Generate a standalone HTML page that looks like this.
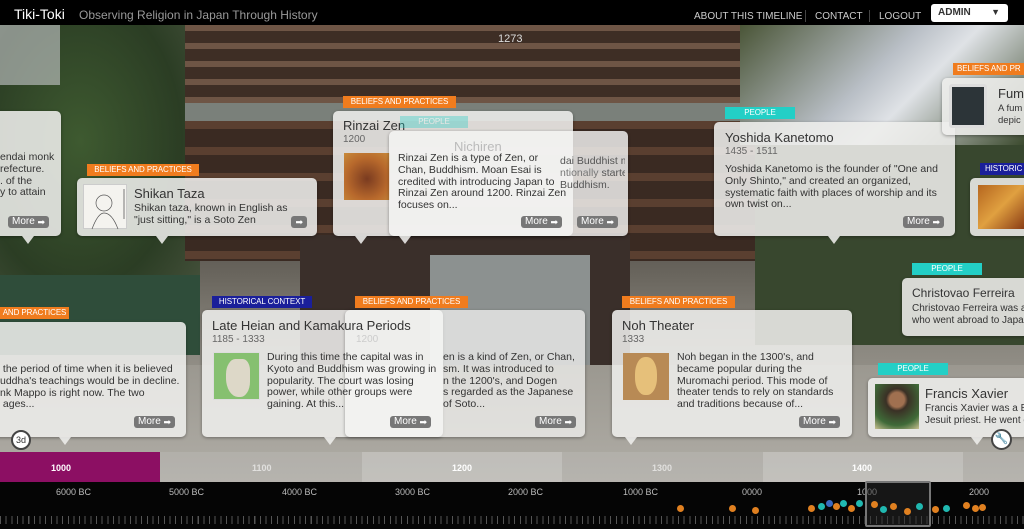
<!DOCTYPE html>
<html><head><meta charset="utf-8"><style>
*{margin:0;padding:0;box-sizing:border-box}
body{width:1024px;height:529px;overflow:hidden;position:relative;font-family:"Liberation Sans",Arial,sans-serif;background:#000}
.a{position:absolute}
.bg{position:absolute;left:0;top:25px;width:1024px;height:457px;overflow:hidden;
background:linear-gradient(180deg,#5a4638 0%,#6b5444 20%,#4e4a45 40%,#6a665e 55%,#8a877f 70%,#a09c94 85%,#8e8a82 100%)}
.card{position:absolute;background:rgba(238,238,236,0.88);border-radius:5px;box-shadow:0 1px 3px rgba(0,0,0,.35);color:#333;font-size:11px;line-height:12px}
.lab{position:absolute;height:12px;font-size:8px;line-height:12px;color:#fff;text-align:center;text-transform:uppercase;letter-spacing:-.1px;white-space:nowrap;overflow:hidden}
.o{background:#f07c1e}.c{background:#23cfc6}.b{background:#1a1f9a}
.t{position:absolute;font-size:13px;color:#333;white-space:nowrap}
.d{position:absolute;font-size:10px;color:#666}
.p{position:absolute;font-size:10.5px;line-height:11.8px;color:#333;white-space:nowrap}
.more{position:absolute;width:41px;height:12px;background:#777;border-radius:3px;color:#fff;font-size:10px;line-height:12px;padding-left:4px}
.more:after{content:"➡";position:absolute;right:4px;top:0;font-size:9px}
.ar{position:absolute;width:0;height:0;border-left:6px solid transparent;border-right:6px solid transparent;border-top:8px solid rgba(238,238,236,0.88)}
.img{position:absolute}
.nav{position:absolute;top:11px;color:#ccc;font-size:10px}
.yl{position:absolute;top:463px;font-size:9px;font-weight:bold;color:#fff}
.bl{position:absolute;top:487px;font-size:9px;color:#bbb}
.dot{position:absolute;width:7px;height:7px;border-radius:50%}
</style></head><body>
<div class="bg">
 <div class="a" style="left:0;top:0;width:200px;height:290px;background:radial-gradient(ellipse at 40% 40%,#3e5a30,#2b3d24 60%,#4a5540)"></div>
 <div class="a" style="left:0;top:0;width:60px;height:60px;background:#c9cccf;opacity:.6"></div>
 <div class="a" style="left:185px;top:0;width:570px;height:80px;background:repeating-linear-gradient(180deg,#6e5545 0 6px,#3e2e25 6px 18px)"></div>
 <div class="a" style="left:185px;top:78px;width:570px;height:18px;background:#7a807a"></div>
 <div class="a" style="left:185px;top:96px;width:570px;height:140px;background:repeating-linear-gradient(180deg,#5a3f30 0 8px,#3a2a22 8px 26px)"></div>
 <div class="a" style="left:740px;top:0;width:284px;height:120px;background:linear-gradient(135deg,#4a5537,#b9bfc6 45%,#dfe2e6 60%,#3c4a2e)"></div>
 <div class="a" style="left:755px;top:120px;width:269px;height:200px;background:#38472e"></div>
 <div class="a" style="left:300px;top:210px;width:330px;height:150px;background:#3a2f2a"></div>
 <div class="a" style="left:430px;top:230px;width:160px;height:140px;background:#8c9190"></div>
 <div class="a" style="left:0;top:250px;width:200px;height:80px;background:#2f4d3a"></div>
 <div class="a" style="left:0;top:340px;width:1024px;height:117px;background:linear-gradient(180deg,#9b9890,#b0ada6)"></div>
</div>
<!-- header -->
<div class="a" style="left:0;top:0;width:1024px;height:25px;background:#000"></div>
<div class="a" style="left:14px;top:6px;color:#fff;font-size:14px">Tiki-Toki</div>
<div class="a" style="left:79px;top:8px;color:#999;font-size:12px">Observing Religion in Japan Through History</div>
<div class="nav" style="left:694px">ABOUT THIS TIMELINE</div>
<div class="a" style="left:805px;top:10px;width:1px;height:12px;background:#444"></div>
<div class="nav" style="left:815px">CONTACT</div>
<div class="a" style="left:869px;top:10px;width:1px;height:12px;background:#444"></div>
<div class="nav" style="left:879px">LOGOUT</div>
<div class="a" style="left:931px;top:4px;width:77px;height:18px;background:#fff;border-radius:3px;font-size:10px;font-weight:bold;color:#333;padding:3px 0 0 7px">ADMIN<span style="position:absolute;right:8px;top:3px;font-size:9px">▼</span></div>
<div class="a" style="left:498px;top:33px;color:#ddd;font-size:11px">1273</div>

<!-- left top cut -->
<div class="card" style="left:-10px;top:111px;width:71px;height:125px"></div>
<div class="p" style="left:0;top:152px;width:60px;overflow:hidden">endai monk<br>refecture.<br>. of the<br>y to attain</div>
<div class="more" style="left:8px;top:216px">More</div>
<div class="ar" style="left:22px;top:236px"></div>

<!-- Shikan -->
<div class="lab o" style="left:87px;top:164px;width:112px">Beliefs and practices</div>
<div class="card" style="left:77px;top:178px;width:240px;height:58px"></div>
<div class="img" style="left:83px;top:184px;width:44px;height:45px;background:#f4f3ef;border:1px solid #ccc"><svg width="44" height="45"><circle cx="20" cy="18" r="8" fill="none" stroke="#555" stroke-width=".7"/><path d="M8 44 Q14 28 20 28 Q28 28 34 44" fill="none" stroke="#555" stroke-width=".7"/><line x1="40" y1="4" x2="40" y2="34" stroke="#777"/></svg></div>
<div class="t" style="left:134px;top:186px">Shikan Taza</div>
<div class="p" style="left:134px;top:203px">Shikan taza, known in English as<br>"just sitting," is a Soto Zen</div>
<div class="more" style="left:291px;top:216px;width:16px;padding:0"></div>
<div class="ar" style="left:156px;top:236px"></div>

<!-- Rinzai -->
<div class="lab o" style="left:343px;top:96px;width:113px">Beliefs and practices</div>
<div class="card" style="left:333px;top:111px;width:240px;height:125px"></div>
<div class="t" style="left:343px;top:118px">Rinzai Zen</div>
<div class="d" style="left:343px;top:134px">1200</div>
<div class="img" style="left:344px;top:153px;width:46px;height:47px;background:radial-gradient(circle at 50% 55%,#7a3b20,#b8692c 60%,#c88a3a)"></div>
<div class="lab c" style="left:400px;top:116px;width:68px;opacity:.35">People</div>
<div class="card" style="left:389px;top:131px;width:239px;height:105px;background:rgba(245,245,244,.82)"></div>
<div class="t" style="left:454px;top:139px;color:#bbb">Nichiren</div>
<div class="p" style="left:398px;top:153px">Rinzai Zen is a type of Zen, or<br>Chan, Buddhism. Moan Esai is<br>credited with introducing Japan to<br>Rinzai Zen around 1200. Rinzai Zen<br>focuses on...</div>
<div class="p" style="left:560px;top:156px;color:#555;width:65px;overflow:hidden">dai Buddhist monk<br><span style="color:#777">ntionally</span> started<br>Buddhism.</div>
<div class="more" style="left:521px;top:216px">More</div>
<div class="more" style="left:577px;top:216px">More</div>
<div class="ar" style="left:355px;top:236px"></div>
<div class="ar" style="left:399px;top:236px"></div>

<!-- Yoshida -->
<div class="lab c" style="left:725px;top:107px;width:70px">People</div>
<div class="card" style="left:714px;top:122px;width:241px;height:114px"></div>
<div class="t" style="left:725px;top:130px">Yoshida Kanetomo</div>
<div class="d" style="left:725px;top:146px">1435 - 1511</div>
<div class="p" style="left:725px;top:164px">Yoshida Kanetomo is the founder of "One and<br>Only Shinto," and created an organized,<br>systematic faith with places of worship and its<br>own twist on...</div>
<div class="more" style="left:903px;top:216px">More</div>
<div class="ar" style="left:828px;top:236px"></div>

<!-- Fumi -->
<div class="lab o" style="left:953px;top:63px;width:71px;text-align:left;padding-left:4px">Beliefs and pr</div>
<div class="card" style="left:942px;top:78px;width:90px;height:57px"></div>
<div class="img" style="left:949px;top:84px;width:38px;height:44px;background:#2c3438;border:3px solid #ddd;border-radius:3px"></div>
<div class="t" style="left:998px;top:86px">Fum</div>
<div class="p" style="left:998px;top:103px;font-size:9.5px">A fum<br>depic</div>

<!-- Historic -->
<div class="lab b" style="left:980px;top:163px;width:44px;text-align:left;padding-left:5px">Historic</div>
<div class="card" style="left:970px;top:178px;width:60px;height:58px"></div>
<div class="img" style="left:978px;top:185px;width:46px;height:44px;background:linear-gradient(135deg,#b5661f,#e0a040,#8a3c14)"></div>

<!-- Christovao -->
<div class="lab c" style="left:912px;top:263px;width:70px">People</div>
<div class="card" style="left:902px;top:278px;width:130px;height:58px"></div>
<div class="t" style="left:912px;top:286px;font-size:12px">Christovao Ferreira</div>
<div class="p" style="left:912px;top:303px;font-size:10px">Christovao Ferreira was a<br>who went abroad to Japar</div>

<!-- Francis -->
<div class="lab c" style="left:878px;top:363px;width:70px">People</div>
<div class="card" style="left:868px;top:378px;width:160px;height:59px"></div>
<div class="img" style="left:875px;top:384px;width:44px;height:45px;background:radial-gradient(circle at 50% 35%,#a07050 0 20%,#3a3025 30%,#3f6a38 70%,#c8c090)"></div>
<div class="t" style="left:925px;top:386px">Francis Xavier</div>
<div class="p" style="left:925px;top:403px;font-size:10px">Francis Xavier was a E<br>Jesuit priest. He went c</div>
<div class="ar" style="left:971px;top:437px"></div>

<!-- left bottom -->
<div class="lab o" style="left:0;top:307px;width:69px">and practices</div>
<div class="card" style="left:-10px;top:322px;width:196px;height:115px"></div>
<div class="p" style="left:0;top:364px;width:185px;overflow:hidden">&nbsp;the period of time when it is believed<br>uddha's teachings would be in decline.<br>nk Mappo is right now. The two<br>&nbsp;ages...</div>
<div class="more" style="left:134px;top:416px">More</div>
<div class="ar" style="left:59px;top:437px"></div>

<!-- Late Heian card + Soto card -->
<div class="lab b" style="left:212px;top:296px;width:100px">Historical context</div>
<div class="card" style="left:202px;top:310px;width:241px;height:127px"></div>
<div class="lab o" style="left:355px;top:296px;width:113px">Beliefs and practices</div>
<div class="card" style="left:345px;top:310px;width:240px;height:127px;background:rgba(248,248,247,.7)"></div>
<div class="d" style="left:356px;top:334px;color:#ccc">1200</div>
<div class="p" style="left:443px;top:352px">en is a kind of Zen, or Chan,<br>sm. It was introduced to<br>n the 1200's, and Dogen<br>s regarded as the Japanese<br>of Soto...</div>
<div class="t" style="left:212px;top:318px">Late Heian and Kamakura Periods</div>
<div class="d" style="left:212px;top:334px">1185 - 1333</div>
<div class="img" style="left:213px;top:352px;width:47px;height:48px;background:#86c070;border:1px solid #ddd"><div style="position:absolute;left:12px;top:6px;width:24px;height:38px;background:#ddd8c8;border-radius:40% 30% 40% 50%"></div></div>
<div class="p" style="left:267px;top:352px">During this time the capital was in<br>Kyoto and Buddhism was growing in<br>popularity. The court was losing<br>power, while other groups were<br>gaining. At this...</div>
<div class="ar" style="left:324px;top:437px"></div>
<div class="more" style="left:390px;top:416px">More</div>
<div class="more" style="left:535px;top:416px">More</div>

<!-- Noh -->
<div class="lab o" style="left:622px;top:296px;width:113px">Beliefs and practices</div>
<div class="card" style="left:612px;top:310px;width:240px;height:127px"></div>
<div class="t" style="left:622px;top:318px">Noh Theater</div>
<div class="d" style="left:622px;top:334px">1333</div>
<div class="img" style="left:623px;top:353px;width:46px;height:47px;background:#b88a55"><div style="position:absolute;left:12px;top:4px;width:22px;height:38px;background:#e6c07a;border-radius:45%"></div></div>
<div class="p" style="left:677px;top:352px">Noh began in the 1300's, and<br>became popular during the<br>Muromachi period. This mode of<br>theater tends to rely on standards<br>and traditions because of...</div>
<div class="more" style="left:799px;top:416px">More</div>
<div class="ar" style="left:625px;top:437px"></div>

<!-- circles -->
<div class="a" style="left:11px;top:430px;width:20px;height:20px;border-radius:50%;background:#fff;border:2px solid #444;font-size:9px;text-align:center;line-height:16px;color:#333">3d</div>
<div class="a" style="left:991px;top:429px;width:21px;height:21px;border-radius:50%;background:#fff;border:2px solid #444;font-size:11px;text-align:center;line-height:17px;color:#333">🔧</div>

<!-- band -->
<div class="a" style="left:0;top:452px;width:1024px;height:30px;background:rgba(200,200,200,.25)"></div>
<div class="a" style="left:0;top:452px;width:160px;height:30px;background:#8c0f63"></div>
<div class="a" style="left:362px;top:452px;width:200px;height:30px;background:rgba(255,255,255,.18)"></div>
<div class="a" style="left:763px;top:452px;width:200px;height:30px;background:rgba(255,255,255,.18)"></div>
<div class="yl" style="left:51px">1000</div>
<div class="yl" style="left:252px;opacity:.6">1100</div>
<div class="yl" style="left:452px">1200</div>
<div class="yl" style="left:652px;opacity:.6">1300</div>
<div class="yl" style="left:852px">1400</div>

<!-- bottom -->
<div class="a" style="left:0;top:482px;width:1024px;height:47px;background:#050505"></div>
<div class="bl" style="left:56px">6000 BC</div>
<div class="bl" style="left:169px">5000 BC</div>
<div class="bl" style="left:282px">4000 BC</div>
<div class="bl" style="left:395px">3000 BC</div>
<div class="bl" style="left:508px">2000 BC</div>
<div class="bl" style="left:623px">1000 BC</div>
<div class="bl" style="left:742px">0000</div>
<div class="bl" style="left:857px">1000</div>
<div class="bl" style="left:969px">2000</div>
<div class="a" style="left:0;top:516px;width:1024px;height:8px;background:repeating-linear-gradient(90deg,#555 0 1px,transparent 1px 5.65px)"></div>
<div class="a" style="left:865px;top:481px;width:66px;height:46px;border:2px solid #777;border-radius:2px;background:rgba(40,40,40,.5)"></div>
<div class="dot" style="left:677px;top:505px;background:#e08020"></div>
<div class="dot" style="left:729px;top:505px;background:#e08020"></div>
<div class="dot" style="left:752px;top:507px;background:#e08020"></div>
<div class="dot" style="left:808px;top:505px;background:#e08020"></div>
<div class="dot" style="left:818px;top:503px;background:#20b8b0"></div>
<div class="dot" style="left:826px;top:500px;background:#3a6ac0"></div>
<div class="dot" style="left:833px;top:503px;background:#e08020"></div>
<div class="dot" style="left:840px;top:500px;background:#20b8b0"></div>
<div class="dot" style="left:848px;top:505px;background:#e08020"></div>
<div class="dot" style="left:856px;top:500px;background:#20b8b0"></div>
<div class="dot" style="left:871px;top:501px;background:#e08020"></div>
<div class="dot" style="left:880px;top:506px;background:#20b8b0"></div>
<div class="dot" style="left:890px;top:503px;background:#e08020"></div>
<div class="dot" style="left:904px;top:508px;background:#e08020"></div>
<div class="dot" style="left:916px;top:503px;background:#20b8b0"></div>
<div class="dot" style="left:932px;top:506px;background:#e08020"></div>
<div class="dot" style="left:943px;top:505px;background:#20b8b0"></div>
<div class="dot" style="left:963px;top:502px;background:#e08020"></div>
<div class="dot" style="left:972px;top:505px;background:#e08020"></div>
<div class="dot" style="left:979px;top:504px;background:#e08020"></div>
</body></html>
